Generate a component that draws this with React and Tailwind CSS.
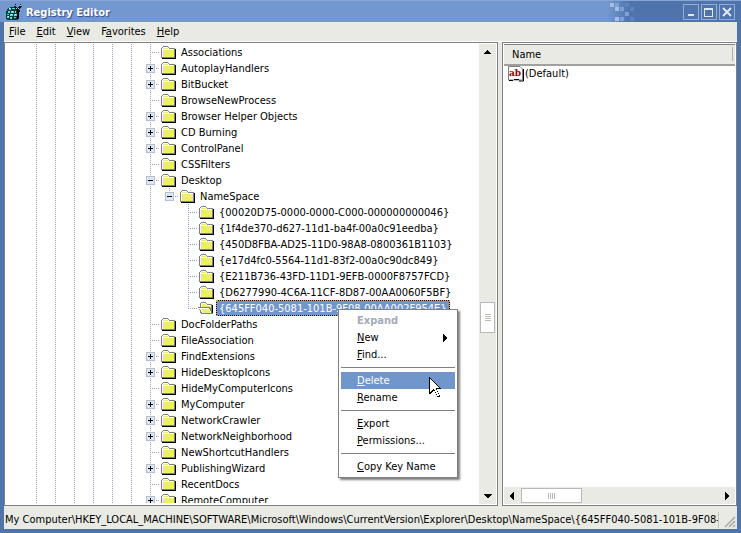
const treeItems = [
    { name: 'Associations' },
    { name: 'AutoplayHandlers', toggle: '+' },
    { name: 'BitBucket', toggle: '+' },
    { name: 'BrowseNewProcess' },
    { name: 'Browser Helper Objects', toggle: '+' },
    { name: 'CD Burning', toggle: '+' },
    { name: 'ControlPanel', toggle: '+' },
    { name: 'CSSFilters' },
    { name: 'Desktop', toggle: '-' },
    { name: 'NameSpace', toggle: '-', level: 1, last: true },
    { name: '{00020D75-0000-0000-C000-000000000046}', level: 2 },
    { name: '{1f4de370-d627-11d1-ba4f-00a0c91eedba}', level: 2 },
    { name: '{450D8FBA-AD25-11D0-98A8-0800361B1103}', level: 2 },
    { name: '{e17d4fc0-5564-11d1-83f2-00a0c90dc849}', level: 2 },
    { name: '{E211B736-43FD-11D1-9EFB-0000F8757FCD}', level: 2 },
    { name: '{D6277990-4C6A-11CF-8D87-00AA0060F5BF}', level: 2 },
    { name: '{645FF040-5081-101B-9F08-00AA002F954E}', level: 2, last: true, selected: true },
    { name: 'DocFolderPaths' },
    { name: 'FileAssociation' },
    { name: 'FindExtensions', toggle: '+' },
    { name: 'HideDesktopIcons', toggle: '+' },
    { name: 'HideMyComputerIcons' },
    { name: 'MyComputer', toggle: '+' },
    { name: 'NetworkCrawler', toggle: '+' },
    { name: 'NetworkNeighborhood', toggle: '+' },
    { name: 'NewShortcutHandlers' },
    { name: 'PublishingWizard', toggle: '+' },
    { name: 'RecentDocs' },
    { name: 'RemoteComputer', toggle: '+' },
];

const menuGroups = [
    [
        { key: '', label: 'Expand', disabled: true },
        { key: 'N', label: 'ew', submenu: true },
        { key: 'F', label: 'ind...' },
    ],
    [
        { key: 'D', label: 'elete', active: true },
        { key: 'R', label: 'ename' },
    ],
    [
        { key: 'E', label: 'xport' },
        { key: 'P', label: 'ermissions...' },
    ],
    [{ key: 'C', label: 'opy Key Name' }],
];

function AppIcon() {
    return (
        <svg viewBox="0 0 16 16" className="size-4" shapeRendering="crispEdges" aria-hidden="true">
            <path d="M2 4h2V3h6v1h1v2h2v9h-1v1H1v-1H0V7h1V5h1z" fill="#0a3c3c" />
            <path d="M11 5h2v9h-1v1h-1z" fill="#000" />
            <path d="M3 4h2v2H3zM6 4h3v1H6zM2 7h2v2H2zM5 7h3v2H5zM9 7h1v2H9zM1 10h2v1H1zM4 10h3v2H4zM8 10h3v2H8zM1 12h2v2H1zM4 13h2v2H4zM8 13h2v1H8z" fill="#4de0e0" />
            <path d="M3 4h1v1H3zM6 7h1v1H6zM5 10h1v1H5zM2 12h1v1H2zM9 10h1v1H9z" fill="#fff" />
            <path d="M8 2h2v1h1v1h1V3h1V2h1V0h1v2h1v1h-1v1h-1v1h-1v1h-3V5H9V3H8zM9 0h1v1H9zM12 6h2v2h-2z" fill="#111" />
            <path d="M10 4h1v1h-1zM12 4h1v1h-1zM14 1h1v1h-1z" fill="#a8dcdc" />
        </svg>
    );
}

function Folder({ open }) {
    return (
        <svg viewBox="0 0 16 14" className="h-3.5 w-4 shrink-0" shapeRendering="crispEdges" aria-hidden="true">
            <defs>
                <pattern id="dither" width="2" height="2" patternUnits="userSpaceOnUse">
                    <path d="M0 0h2v2H0z" fill="#ffff00" />
                    <path d="M0 0h1v1H0zM1 1h1v1H1z" fill="#deded0" />
                </pattern>
            </defs>
            {open ? (
                <>
                    <path d="M3 1h5v1h1v1h5v10H3v-1H2V2h1z" fill="#808080" />
                    <path d="M3 2h5v1h1v1h4v4H3z" fill="#fff" />
                    <path d="M4 3h4v1h1v1h4v3H4z" fill="url(#dither)" />
                    <path d="M14 4h1v9H4v-1h10z" fill="#000" />
                    <path d="M0 6h12v1h1v2h1v3h1v1H3v-2H2V9H1V7H0z" fill="#808080" />
                    <path d="M1 7h10v1h1v2h1v2H4v-1H3V9H2V8H1z" fill="#fff" />
                    <path d="M3 8h8v2h1v2H5v-1H4V9H3z" fill="url(#dither)" />
                </>
            ) : (
                <>
                    <path d="M15 4h1v10H2v-1h13z" fill="#000" />
                    <path d="M3 1h5v1h1v1h6v10H1V3h1V2h1z" fill="#808080" />
                    <path d="M3 2h5v1h1v1h5v8H2V3h1z" fill="#fff" />
                    <path d="M3 3h5v1H3zM3 5h11v7H3z" fill="url(#dither)" />
                </>
            )}
        </svg>
    );
}

const dots = 'bg-[repeating-linear-gradient(to_bottom,#93a1bd_0_1px,#ffffff_1px_2px)]';
const hdots = 'bg-[repeating-linear-gradient(to_right,#93a1bd_0_1px,#ffffff_1px_2px)]';

function Guide({ blank }) {
    return (
        <span className="flex h-full w-[19px] shrink-0 justify-center">
            {!blank && <span className={`h-full w-px ${dots}`} />}
        </span>
    );
}

function Branch({ toggle, last }) {
    return (
        <span className="relative h-full w-[19px] shrink-0">
            <span className={`absolute top-0 left-[9px] w-px ${last ? 'h-2' : 'h-full'} ${dots}`} />
            <span className={`absolute top-2 right-0 left-[9px] h-px ${hdots}`} />
            {toggle && (
                <button aria-label={toggle === '+' ? 'Expand key' : 'Collapse key'} className="absolute top-1 left-[5px] flex size-[9px] items-center justify-center border border-[#b4bfd6] bg-[#dfe5f1]">
                    <svg viewBox="0 0 5 5" className="size-[5px] shrink-0" shapeRendering="crispEdges">
                        <path d={toggle === '+' ? 'M0 2h2V0h1v2h2v1H3v2H2V3H0z' : 'M0 2h5v1H0z'} fill="#000" />
                    </svg>
                </button>
            )}
        </span>
    );
}

function TreeRow({ name, toggle, level = 0, last, selected }) {
    return (
        <li className="flex h-4 items-center pl-[22px] whitespace-nowrap">
            {[0, 1, 2, 3, 4, 5].map(i => <Guide key={i} />)}
            {level > 0 && <Guide />}
            {level > 1 && <Guide blank />}
            <Branch toggle={toggle} last={last} />
            <Folder open={selected} />
            <span className={`ml-0.5 border border-dotted ${selected ? 'border-[#e8a040] bg-black text-white' : 'border-transparent'}`}>
                <span className={`block pt-0.5 pr-0.5 pl-0.5 leading-3 ${selected ? 'bg-[#7096cc]' : ''}`}>{name}</span>
            </span>
        </li>
    );
}

function Arrow({ dir }) {
    const paths = {
        up: 'M4 2h1v1h1v1h1v1h1v1H1V5h1V4h1V3h1z',
        down: 'M1 2h8v1H8v1H7v1H6v1H4V5H3V4H2V3H1z',
        left: 'M6 0v8H5V7H4V6H3V5H2V3h1V2h1V1h1V0z',
        right: 'M3 0h1v1h1v1h1v1h1v2H6v1H5v1H4v1H3z',
    };
    return (
        <svg viewBox="0 0 9 8" className="h-2 w-[9px]" shapeRendering="crispEdges" aria-hidden="true">
            <path d={paths[dir]} fill="#000" />
        </svg>
    );
}

function TitleBar() {
    return (
        <header className="flex h-[22px] shrink-0 items-center border-t border-[#86a5d5] bg-[linear-gradient(to_right,#7398d0_0%,#7398d0_82%,#4f74ac_85%,#4f74ac_100%)] px-1.5">
            <AppIcon />
            <h1 className="ml-1 flex-1 pt-0.5 text-[11px] font-bold text-white [text-shadow:1px_1px_1px_#2d4d80]">Registry Editor</h1>
            <svg viewBox="0 0 25 20" className="mr-12 h-5 w-[25px]" shapeRendering="crispEdges" aria-hidden="true">
                <path d="M0 1h4v4H0zM5 5h4v4H5zM5 15h4v4H5z" fill="#a5bfe6" />
                <path d="M5 1h4v4H5zM10 5h4v4h-4zM15 10h4v4h-4zM10 15h4v4h-4z" fill="#7fa1d6" />
                <path d="M15 1h4v4h-4zM20 5h4v4h-4zM20 15h4v4h-4z" fill="#5f85bf" />
            </svg>
            <div className="flex gap-0.5">
                <button aria-label="Minimize" className="flex size-4 items-center justify-center border border-[#93add6]">
                    <svg viewBox="0 0 10 10" className="size-2.5" shapeRendering="crispEdges"><path d="M2 7h6v2H2z" fill="#dfe8f5" /></svg>
                </button>
                <button aria-label="Maximize" className="flex size-4 items-center justify-center border border-[#93add6]">
                    <svg viewBox="0 0 10 10" className="size-2.5" shapeRendering="crispEdges"><path d="M0 1h9v9H0zM1 3v6h7V3z" fillRule="evenodd" fill="#dfe8f5" /></svg>
                </button>
                <button aria-label="Close" className="flex size-4 items-center justify-center border border-[#93add6]">
                    <svg viewBox="0 0 10 10" className="size-2.5"><path d="M1 1l8 8M9 1l-8 8" stroke="#dfe8f5" strokeWidth="2" /></svg>
                </button>
            </div>
        </header>
    );
}

function MenuBar() {
    const items = [['', 'F', 'ile'], ['', 'E', 'dit'], ['', 'V', 'iew'], ['F', 'a', 'vorites'], ['', 'H', 'elp']];
    return (
        <nav className="flex h-5 shrink-0 items-center border-b border-white bg-[#e9eae4]">
            {items.map(([pre, key, post]) => (
                <button key={key} className="pr-1.5 pl-[5px]">{pre}<u className="underline-offset-1">{key}</u>{post}</button>
            ))}
        </nav>
    );
}

function ContextMenu() {
    return (
        <div role="menu" className="absolute top-[266px] left-[333px] w-[120px] border border-[#808080] bg-white p-0.5 shadow-[2px_2px_2px_#00000080]">
            {menuGroups.map((group, i) => (
                <div key={i}>
                    {i > 0 && <hr className="my-1 border-t border-[#808080]" />}
                    {group.map(item => (
                        <button
                            key={item.label}
                            role="menuitem"
                            disabled={item.disabled}
                            className={`flex h-[17px] w-full items-center justify-between pr-1.5 pl-4 ${item.active ? 'bg-[#7096cc] text-white' : ''} ${item.disabled ? 'font-bold text-[#a3abba]' : ''}`}
                        >
                            <span><u className="underline-offset-1">{item.key}</u>{item.label}</span>
                            {item.submenu && <Arrow dir="right" />}
                        </button>
                    ))}
                </div>
            ))}
            <svg viewBox="0 0 12 21" className="absolute top-[67px] left-[90px] h-[21px] w-3" shapeRendering="crispEdges" aria-hidden="true">
                <path d="M0 0h1v1h1v1h1v1h1v1h1v1h1v1h1v1h1v1h1v1h1v1h1v1h1v1H8v2h1v2h1v2h1v2H8v-2H7v-2H6v-2H4v1H3v1H2v1H0z" fill="#000" />
                <path d="M1 2h1v1h1v1h1v1h1v1h1v1h1v1h1v1h1v1h1v1H7v2h1v2h1v2h1v2H8v-2H7v-2H6v-2H5v-1H4v1H3v1H2v1H1z" fill="#fff" />
            </svg>
        </div>
    );
}

function TreePane() {
    return (
        <section className="relative flex w-[494px] shrink-0 border border-[#808080] bg-white">
            <ul className="mb-0.5 min-w-0 flex-1 overflow-hidden pt-px">
                {treeItems.map(item => <TreeRow key={item.name} {...item} />)}
            </ul>
            <div className="my-px mr-px flex w-[17px] flex-col items-center bg-[#e9eae4]">
                <button aria-label="Scroll up" className="flex h-4 w-full items-center justify-center"><Arrow dir="up" /></button>
                <div className="flex w-full flex-1 flex-col items-center">
                    <div className="grow-[243]" />
                    <div className="flex h-[31px] w-[15px] flex-col items-center justify-center gap-px border border-[#b9bab6] bg-white">
                        {[0, 1, 2, 3].map(i => <span key={i} className="h-px w-1.5 bg-[#b9bab6]" />)}
                    </div>
                    <div className="grow-[156]" />
                </div>
                <button aria-label="Scroll down" className="flex h-4 w-full items-center justify-center"><Arrow dir="down" /></button>
            </div>
            <ContextMenu />
        </section>
    );
}

function ValuePane() {
    return (
        <section className="flex min-w-0 flex-1 flex-col border border-[#808080] bg-white p-px">
            <table className="w-full">
                <thead>
                    <tr>
                        <th className="h-5 border-t border-b-2 border-t-[#808080] border-b-[#a0a09c] bg-[#e9eae4] p-0 pl-2 text-left font-normal">
                            <span className="mr-0.5 block border-r border-[#b0b0ac] pt-0.5 leading-3">Name</span>
                        </th>
                    </tr>
                </thead>
                <tbody>
                    <tr>
                        <td className="p-0 pl-1">
                            <span className="flex h-4 items-center gap-px">
                                <svg viewBox="0 0 16 16" className="size-4" aria-hidden="true">
                                    <path d="M.5 14V.5H12l2.500 2.500V14z" fill="#fff" stroke="#808080" />
                                    <path d="M15.500 3v12H11M1 14.500h4M6 13.500h5" fill="none" stroke="#000" />
                                    <text x="1" y="10" fontSize="10" fontWeight="bold" fill="#900000" className='font-["DejaVu_Serif_Condensed","DejaVu_Serif",serif]'>ab</text>
                                </svg>
                                (Default)
                            </span>
                        </td>
                    </tr>
                </tbody>
            </table>
            <div className="mt-auto flex h-[17px] items-center bg-[#e9eae4]">
                <button aria-label="Scroll left" className="flex w-[17px] justify-center"><Arrow dir="left" /></button>
                <div className="flex h-[15px] w-[61px] items-center justify-center gap-px border border-[#b9bab6] bg-white">
                    {[0, 1, 2, 3].map(i => <span key={i} className="h-1.5 w-px bg-[#b9bab6]" />)}
                </div>
                <button aria-label="Scroll right" className="ml-auto flex w-[17px] justify-center"><Arrow dir="right" /></button>
            </div>
        </section>
    );
}

export default function App() {
    return (
        <div className='flex h-screen flex-col bg-[#4f74ac] font-["DejaVu_Sans_Condensed","DejaVu_Sans",sans-serif] text-[11px] leading-4 text-black'>
            <TitleBar />
            <div className="mx-1 mb-1 flex min-h-0 flex-1 flex-col bg-[#e9eae4]">
                <MenuBar />
                <main className="flex min-h-0 flex-1 gap-1">
                    <TreePane />
                    <ValuePane />
                </main>
                <footer className="flex h-[23px] shrink-0 items-center pt-1">
                    <p className="min-w-0 flex-1 overflow-hidden border-r border-[#c4c5c0] pl-px whitespace-nowrap">
                        {'My Computer\\HKEY_LOCAL_MACHINE\\SOFTWARE\\Microsoft\\Windows\\CurrentVersion\\Explorer\\Desktop\\NameSpace\\{645FF040-5081-101B-9F08-00AA002F954E}'}
                    </p>
                    <svg viewBox="0 0 18 18" className="size-[18px]" aria-hidden="true">
                        <path d="M6 16L16 6M10 16l6-6M14 16l2-2" stroke="#a9aaa5" strokeWidth="1.500" />
                    </svg>
                </footer>
            </div>
        </div>
    );
}
